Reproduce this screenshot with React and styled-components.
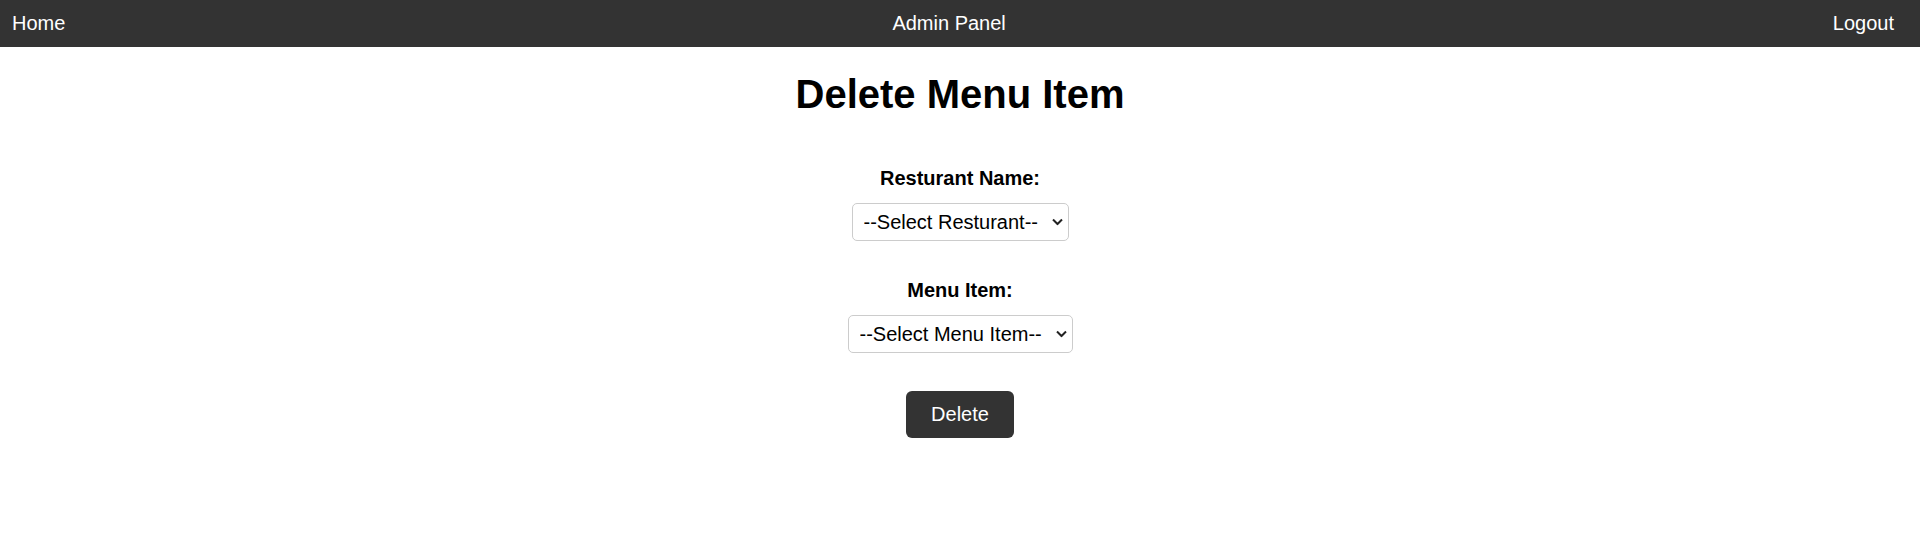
import styled, { createGlobalStyle } from "styled-components";

const GlobalStyle = createGlobalStyle`
	body {
		margin: 0;
		font-family: "Liberation Sans", Arial, sans-serif;
		background: #fff;
		color: #000;
	}
`;

const Nav = styled.nav`
	display: flex;
	justify-content: space-between;
	align-items: center;
	background-color: #333;
	color: #fff;
	padding: 12px 26px 12px 12px;
	font-size: 20px;
	line-height: 23px;

	a {
		color: #fff;
		text-decoration: none;
	}
`;

const Title = styled.h1`
	margin: 24px 0 0;
	text-align: center;
	font-size: 40px;
	line-height: 46px;
	font-weight: bold;
`;

const Form = styled.form`
	display: flex;
	flex-direction: column;
	align-items: center;
	margin-top: 50px;
`;

const Field = styled.div`
	display: flex;
	flex-direction: column;
	align-items: center;
	gap: 13px;
	margin-bottom: 38px;
`;

const Label = styled.label`
	font-size: 20px;
	line-height: 23px;
	font-weight: bold;
`;

const SelectWrap = styled.div`
	position: relative;
	display: inline-flex;

	svg {
		position: absolute;
		right: 6px;
		top: 50%;
		transform: translateY(-50%);
		pointer-events: none;
	}
`;

const Select = styled.select`
	appearance: none;
	font-family: "Liberation Sans", Arial, sans-serif;
	font-size: 20px;
	height: 38px;
	padding: 0 29px 0 11px;
	border: 1px solid #ccc;
	border-radius: 5px;
	background: #fff;
	color: #000;
`;

const Button = styled.button`
	font-family: "Liberation Sans", Arial, sans-serif;
	font-size: 20px;
	line-height: 23px;
	padding: 12px 25px;
	border: none;
	border-radius: 6px;
	background-color: #333;
	color: #fff;
	cursor: pointer;
`;

const Chevron = () => (
	<svg width="11" height="7" viewBox="0 0 11 7" fill="none">
		<path d="M1 1l4.5 4.5L10 1" stroke="#222" strokeWidth="2" />
	</svg>
);

export default function App() {
	return (
		<>
			<GlobalStyle />
			<Nav>
				<a href="#">Home</a>
				<span>Admin Panel</span>
				<a href="#">Logout</a>
			</Nav>
			<Title>Delete Menu Item</Title>
			<Form onSubmit={(e) => e.preventDefault()}>
				<Field>
					<Label htmlFor="restaurant">Resturant Name:</Label>
					<SelectWrap>
						<Select id="restaurant" defaultValue="">
							<option value="">--Select Resturant--</option>
						</Select>
						<Chevron />
					</SelectWrap>
				</Field>
				<Field>
					<Label htmlFor="menuItem">Menu Item:</Label>
					<SelectWrap>
						<Select id="menuItem" defaultValue="">
							<option value="">--Select Menu Item--</option>
						</Select>
						<Chevron />
					</SelectWrap>
				</Field>
				<Button type="submit">Delete</Button>
			</Form>
		</>
	);
}
